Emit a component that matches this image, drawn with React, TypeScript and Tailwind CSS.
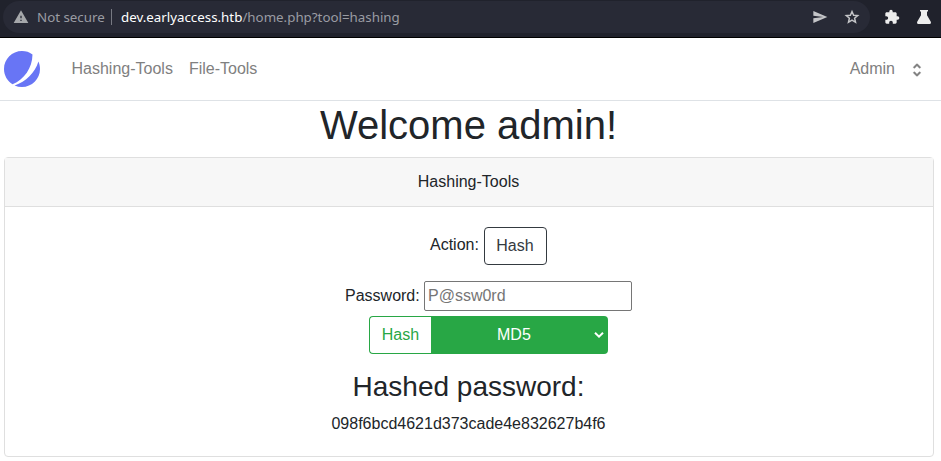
import React from "react";
import { MdExtension, MdSend, MdWarning } from "react-icons/md";

function Star() {
  return (
    <svg width="16" height="16" viewBox="0 0 24 24" fill="none" stroke="currentColor" strokeWidth="2.2">
      <path d="M12 3.8 14.4 9.3 20.6 9.9 15.9 13.9 17.3 19.9 12 16.7 6.7 19.9 8.1 13.9 3.4 9.9 9.6 9.3z" />
    </svg>
  );
}

function Flask() {
  return (
    <svg width="14" height="14" viewBox="0 0 14 14" fill="#ededed">
      <path d="M3 0h8v1.5h-1V5.2L13.8 11.8Q14.4 14 12.6 14H1.4Q-.4 14 .2 11.8L4 5.2V1.5H3z" />
    </svg>
  );
}

function AddressBar() {
  return (
    <div className="flex h-[38px] items-start border-b border-black bg-[#20222c] pl-[3px] font-['Noto_Sans',sans-serif] text-[13.33px]">
      <div className="mt-px flex h-8 w-[867px] items-center rounded-full bg-[#282a36] pl-[10px] text-[#9a9ca3]">
        <MdWarning size={16} color="#a5a7aa" />
        <span className="ml-2 w-[67px] whitespace-nowrap pt-0.5">Not secure</span>
        <span className="ml-[7px] h-4 w-px bg-[#777982]" />
        <span className="ml-[9px] whitespace-nowrap pt-0.5">
          <span className="text-white">dev.earlyaccess.htb</span>/home.php?tool=hashing
        </span>
        <span className="ml-auto mr-[10px] flex items-center gap-4 text-[#c4c5c8]">
          <MdSend size={16} />
          <Star />
        </span>
      </div>
      <div className="ml-[14px] flex h-[34px] items-center gap-[17px]">
        <MdExtension size={16} color="#ededed" />
        <Flask />
      </div>
    </div>
  );
}

function Logo() {
  return (
    <svg width="36" height="36" viewBox="0 0 48 48" fill="#6875F5">
      <path d="M11.395 44.428C4.557 40.198 0 32.632 0 24 0 10.745 10.745 0 24 0a23.891 23.891 0 0113.997 4.502c-.2 17.907-11.097 33.245-26.602 39.926z" />
      <path d="M14.134 45.885A23.914 23.914 0 0024 48c13.255 0 24-10.745 24-24 0-3.516-.756-6.856-2.115-9.866-4.659 15.143-16.608 27.092-31.75 31.751z" />
    </svg>
  );
}

function Nav() {
  return (
    <nav className="flex h-[63px] items-center border-b border-[#dee2e6] pl-1 pr-[15px] text-[#808080]">
      <Logo />
      <span className="ml-[31.5px]">Hashing-Tools</span>
      <span className="ml-4">File-Tools</span>
      <span className="ml-auto">Admin</span>
      <svg className="ml-[13px] mt-[2px]" width="18" height="18" viewBox="0 0 20 20" fill="currentColor" stroke="currentColor" strokeWidth="0.4">
        <path
          fillRule="evenodd"
          d="M10 3a1 1 0 01.707.293l3 3a1 1 0 01-1.414 1.414L10 5.414 7.707 7.707a1 1 0 01-1.414-1.414l3-3A1 1 0 0110 3zm-3.707 9.293a1 1 0 011.414 0L10 14.586l2.293-2.293a1 1 0 011.414 1.414l-3 3a1 1 0 01-1.414 0l-3-3a1 1 0 010-1.414z"
        />
      </svg>
    </nav>
  );
}

export default function App() {
  return (
    <div className="h-[461px] overflow-hidden bg-white font-['Liberation_Sans',Arial,sans-serif] text-base text-[#212529]">
      <AddressBar />
      <Nav />
      <main className="ml-1 w-[930px] text-center">
        <h1 className="mb-2 pr-px text-[40px] leading-[48px]">Welcome admin!</h1>
        <section className="h-[300px] rounded border border-[#dfdfdf]">
          <div className="h-[49px] border-b border-[#dfdfdf] bg-[#f7f7f7] py-3 pr-px leading-6">Hashing-Tools</div>
          <div className="flex flex-col items-center pt-5">
            <div className="flex flex-col items-center pl-[39px]">
              <div className="mb-4 flex w-[117px] justify-between">
                <span className="mt-[6px] leading-6">Action:</span>
                <button className="h-[38px] w-[63px] rounded border border-[#343a40] pr-px text-[#343a40]">Hash</button>
              </div>
              <div className="flex w-[287px] items-center justify-between">
                <label htmlFor="password">Password:</label>
                <input
                  id="password"
                  placeholder="P@ssw0rd"
                  className="h-[30px] w-[208px] rounded-[2px] border border-[#767676] px-[3px] placeholder:text-[#757575]"
                />
              </div>
              <div className="mt-[5px] flex h-[38px] w-[239px]">
                <button className="w-[62px] rounded-l border border-r-0 border-[#28a745] text-[#28a745]">Hash</button>
                <div className="flex flex-1 items-center rounded-r bg-[#28a745] text-white">
                  <span className="ml-[66px]">MD5</span>
                  <svg className="ml-auto mr-[4px]" width="10" height="6" viewBox="0 0 10 6" fill="none" stroke="white" strokeWidth="2">
                    <path d="M1 .8 5 4.6 9 .8" />
                  </svg>
                </div>
              </div>
            </div>
            <h3 className="mb-2 mt-4 pr-px text-[28px] leading-[33.6px]">Hashed password:</h3>
            <p className="pr-px leading-6">098f6bcd4621d373cade4e832627b4f6</p>
          </div>
        </section>
      </main>
    </div>
  );
}
